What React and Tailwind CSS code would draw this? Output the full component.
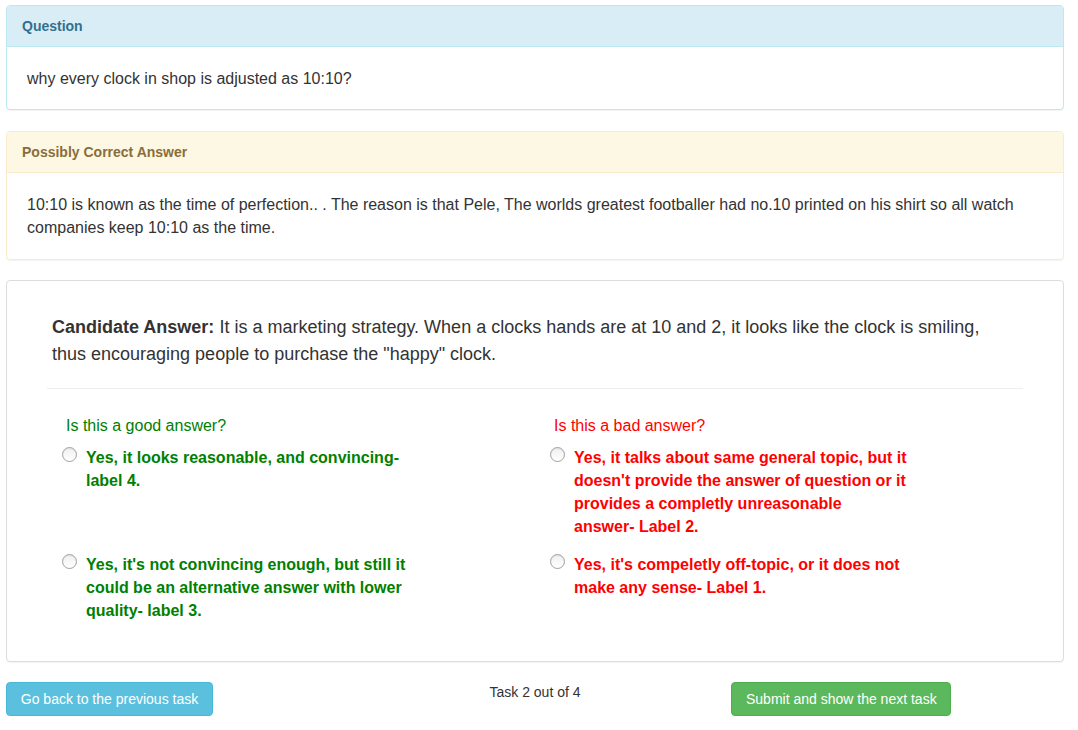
import React from "react";

function Radio() {
  return (
    <span className="mt-[1px] ml-[-4px] block h-[15px] w-[15px] shrink-0 rounded-full border border-[#a0a0a0] bg-gradient-to-b from-[#f0f0f0] to-white shadow-[inset_0_1px_1px_rgba(0,0,0,0.08)]" />
  );
}

function Option({ lines, color }) {
  return (
    <div className="flex items-start">
      <Radio />
      <div className={`ml-[9px] font-bold text-base leading-[23px] whitespace-nowrap ${color}`}>
        {lines.map((l, i) => (
          <div key={i}>{l}</div>
        ))}
      </div>
    </div>
  );
}

export default function App() {
  return (
    <div
      className="min-h-[730px] bg-white pl-[6px] pr-[14px] pt-[5px] text-[#333]"
      style={{ fontFamily: '"Liberation Sans", Arial, Helvetica, sans-serif' }}
    >
      {/* Question panel */}
      <div className="mb-[21px] rounded-[4px] border border-[#bce8f1] shadow-[0_1px_1px_rgba(0,0,0,0.05)]">
        <div className="rounded-t-[3px] border-b border-[#bce8f1] bg-[#d9edf7] px-[15px] py-[10px] text-sm font-bold leading-5 text-[#31708f]">
          Question
        </div>
        <div className="px-5 pt-5 pb-[19px] text-base leading-[23px]">
          why every clock in shop is adjusted as 10:10?
        </div>
      </div>

      {/* Possibly correct answer panel */}
      <div className="mb-5 rounded-[4px] border border-[#faebcc] shadow-[0_1px_1px_rgba(0,0,0,0.05)]">
        <div className="rounded-t-[3px] border-b border-[#faebcc] bg-[#fcf8e3] px-[15px] py-[10px] text-sm font-bold leading-5 text-[#8a6d3b]">
          Possibly Correct Answer
        </div>
        <div className="px-5 py-5 text-base leading-[23px]">
          10:10 is known as the time of perfection.. . The reason is that Pele, The worlds greatest footballer had no.10 printed on his shirt so all watch
          <br />
          companies keep 10:10 as the time.
        </div>
      </div>

      {/* Candidate panel */}
      <div className="mb-5 rounded-[4px] border border-[#ddd] px-10 pt-[33px] pb-[39px] shadow-[0_1px_1px_rgba(0,0,0,0.05)]">
        <p className="pl-[5px] text-[18px] leading-[27px]">
          <b>Candidate Answer:</b> It is a marketing strategy. When a clocks hands are at 10 and 2, it looks like the clock is smiling,
          <br />
          thus encouraging people to purchase the "happy" clock.
        </p>
        <div className="mt-[20px] h-px bg-[#eee]" />
        <div className="grid grid-cols-2">
          <div className="mt-[25px] pl-[19px] text-base leading-[23px] text-[#008000]">
            Is this a good answer?
          </div>
          <div className="mt-[25px] pl-[19px] text-base leading-[23px] text-[#ff0000]">
            Is this a bad answer?
          </div>
          <div className="mt-[9px] pl-[19px]">
            <Option
              color="text-[#008000]"
              lines={["Yes, it looks reasonable, and convincing-", "label 4."]}
            />
          </div>
          <div className="mt-[9px] pl-[19px]">
            <Option
              color="text-[#ff0000]"
              lines={[
                "Yes, it talks about same general topic, but it",
                "doesn't provide the answer of question or it",
                "provides a completly unreasonable",
                "answer- Label 2.",
              ]}
            />
          </div>
          <div className="mt-[15px] pl-[19px]">
            <Option
              color="text-[#008000]"
              lines={[
                "Yes, it's not convincing enough, but still it",
                "could be an alternative answer with lower",
                "quality- label 3.",
              ]}
            />
          </div>
          <div className="mt-[15px] pl-[19px]">
            <Option
              color="text-[#ff0000]"
              lines={[
                "Yes, it's compeletly off-topic, or it does not",
                "make any sense- Label 1.",
              ]}
            />
          </div>
        </div>
      </div>

      {/* Footer */}
      <div className="grid grid-cols-3 items-start">
        <div>
          <button className="h-[34px] w-[207px] rounded-[4px] border border-[#46b8da] bg-[#5bc0de] text-center text-sm leading-5 text-white">
            Go back to the previous task
          </button>
        </div>
        <div className="text-center text-sm leading-5 text-[#333]">Task 2 out of 4</div>
        <div className="pl-[20px]">
          <button className="h-[34px] w-[220px] rounded-[4px] border border-[#4cae4c] bg-[#5cb85c] text-center text-sm leading-5 text-white">
            Submit and show the next task
          </button>
        </div>
      </div>
    </div>
  );
}
